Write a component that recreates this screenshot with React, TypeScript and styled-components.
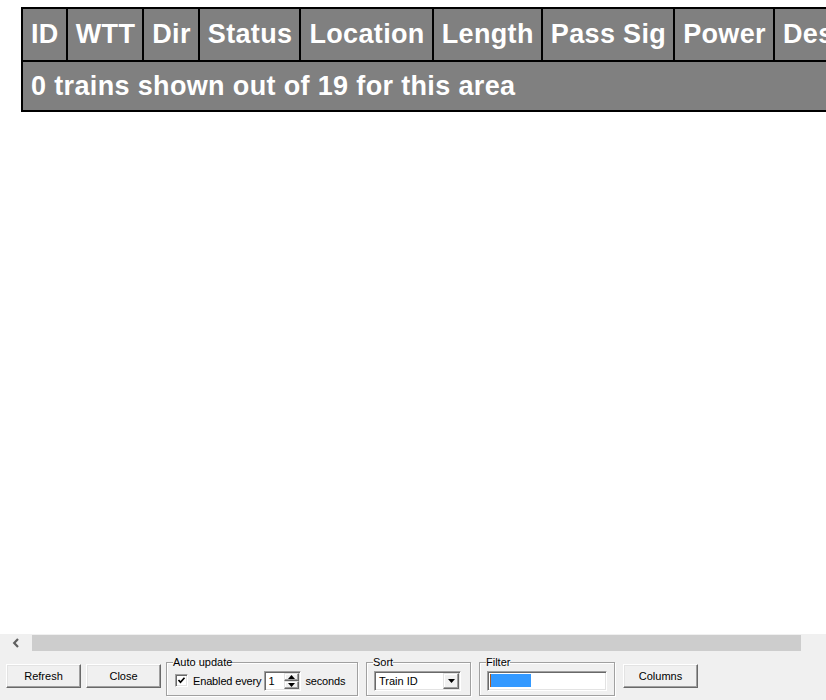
import styled, { createGlobalStyle } from "styled-components";

const GlobalStyle = createGlobalStyle`
  html, body {
    margin: 0;
    padding: 0;
    height: 100%;
  }
  body {
    font-family: "Liberation Sans", Arial, sans-serif;
    background: #ffffff;
    overflow: hidden;
  }
  #root {
    height: 100%;
  }
`;

const columns = [
  "ID",
  "WTT",
  "Dir",
  "Status",
  "Location",
  "Length",
  "Pass Sig",
  "Power",
  "Description",
];

export default function App() {
  return (
    <>
      <GlobalStyle />
      <Page>
        <Content>
          <Table>
            <tbody>
              <tr>
                {columns.map((c) => (
                  <Cell key={c} h={51}>
                    {c}
                  </Cell>
                ))}
              </tr>
              <tr>
                <Cell h={48} colSpan={columns.length}>
                  0 trains shown out of 19 for this area
                </Cell>
              </tr>
            </tbody>
          </Table>
        </Content>

        <Bottom>
          <ScrollBar>
            <ArrowBtn>
              <svg width="8" height="10" viewBox="0 0 8 10">
                <polyline
                  points="6,1 2.2,5 6,9"
                  fill="none"
                  stroke="#606060"
                  strokeWidth="2.2"
                />
              </svg>
            </ArrowBtn>
            <Thumb />
          </ScrollBar>

          <Controls>
            <Button>Refresh</Button>
            <Button>Close</Button>

            <Group w={192}>
              <Legend>Auto update</Legend>
              <Row>
                <CheckBox>
                  <svg width="9" height="9" viewBox="0 0 9 9">
                    <polyline
                      points="1.5,4 3.5,6.2 7.5,1.8"
                      fill="none"
                      stroke="#000"
                      strokeWidth="1.7"
                    />
                  </svg>
                </CheckBox>
                <Label>Enabled every</Label>
                <Spin>
                  <SpinText>1</SpinText>
                  <SpinButtons>
                    <SpinBtn>
                      <svg width="7" height="4" viewBox="0 0 7 4">
                        <polygon points="3.5,0 7,4 0,4" fill="#000" />
                      </svg>
                    </SpinBtn>
                    <SpinBtn>
                      <svg width="7" height="4" viewBox="0 0 7 4">
                        <polygon points="0,0 7,0 3.5,4" fill="#000" />
                      </svg>
                    </SpinBtn>
                  </SpinButtons>
                </Spin>
                <Label>seconds</Label>
              </Row>
            </Group>

            <Group w={105}>
              <Legend>Sort</Legend>
              <Combo>
                <ComboText>Train ID</ComboText>
                <DropBtn>
                  <svg width="7" height="4" viewBox="0 0 7 4">
                    <polygon points="0,0 7,0 3.5,4" fill="#000" />
                  </svg>
                </DropBtn>
              </Combo>
            </Group>

            <Group w={136}>
              <Legend>Filter</Legend>
              <Edit>
                <Caret />
                <Selection />
              </Edit>
            </Group>

            <Button>Columns</Button>
          </Controls>
        </Bottom>
      </Page>
    </>
  );
}

const Page = styled.div`
  height: 100%;
  display: flex;
  flex-direction: column;
`;

const Content = styled.div`
  flex: 1;
  overflow: hidden;
  background: #ffffff;
  padding: 7px 0 0 21px;
`;

const Table = styled.table`
  border-collapse: collapse;
  border: 2px solid #000;
  white-space: nowrap;
`;

const Cell = styled.td<{ h: number }>`
  background: #808080;
  color: #ffffff;
  border: 2px solid #000;
  height: ${({ h }) => h}px;
  padding: 0 7px 0 8px;
  font-family: "Liberation Sans", Arial, sans-serif;
  font-weight: bold;
  font-size: 27px;
  letter-spacing: 0.35px;
  text-align: left;
  vertical-align: middle;
`;

const Bottom = styled.div`
  background: #f0f0f0;
  height: 66px;
  display: flex;
  flex-direction: column;
`;

const ScrollBar = styled.div`
  height: 17px;
  display: flex;
  align-items: stretch;
`;

const ArrowBtn = styled.div`
  width: 32px;
  display: flex;
  align-items: center;
  justify-content: center;
`;

const Thumb = styled.div`
  width: 769px;
  margin: 1px 0 0;
  background: #cdcdcd;
`;

const Controls = styled.div`
  flex: 1;
  display: flex;
  align-items: center;
  padding-left: 6px;
  gap: 5px;
  font-size: 11px;
  color: #000;
  white-space: nowrap;
`;

const Button = styled.div`
  box-sizing: border-box;
  width: 75px;
  height: 24px;
  display: flex;
  align-items: center;
  justify-content: center;
  background: #f0f0f0;
  border: 1px solid;
  border-color: #ffffff #696969 #696969 #ffffff;
  box-shadow: inset -1px -1px 0 #a0a0a0, inset 1px 1px 0 #e3e3e3;
  font-size: 11px;

  fieldset + & {
    margin-left: 3px;
  }
`;

const Group = styled.fieldset<{ w: number }>`
  box-sizing: border-box;
  width: ${({ w }) => w}px;
  margin: 0;
  padding: 2px 4px 4px 7px;
  border: 1px solid #a0a0a0;
  box-shadow: 1px 1px 0 #ffffff, inset 1px 1px 0 #ffffff;
  min-inline-size: 0;

  & + & {
    margin-left: 3px;
  }
`;

const Legend = styled.legend`
  padding: 0;
  margin-left: -1px;
  font-size: 11px;
  line-height: 13px;
`;

const Row = styled.div`
  display: flex;
  align-items: center;
  height: 20px;
  padding-left: 1px;
`;

const CheckBox = styled.span`
  box-sizing: border-box;
  flex: none;
  width: 13px;
  height: 13px;
  background: #fff;
  border: 1px solid;
  border-color: #a0a0a0 #ffffff #ffffff #a0a0a0;
  box-shadow: inset 1px 1px 0 #696969, inset -1px -1px 0 #e3e3e3;
  display: flex;
  align-items: center;
  justify-content: center;
  margin-right: 5px;
`;

const Label = styled.span`
  font-size: 11px;
  letter-spacing: -0.15px;
  margin-right: 3px;
`;

const sunken = `
  box-sizing: border-box;
  flex: none;
  height: 20px;
  background: #ffffff;
  border: 1px solid;
  border-color: #a0a0a0 #ffffff #ffffff #a0a0a0;
  box-shadow: inset 1px 1px 0 #696969, inset -1px -1px 0 #e3e3e3;
  display: flex;
  align-items: center;
`;

const Spin = styled.div`
  ${sunken}
  width: 37px;
  padding: 2px 1px 2px 3px;
  margin-right: 4px;
`;

const SpinText = styled.span`
  flex: 1;
  font-size: 11px;
`;

const SpinButtons = styled.div`
  display: flex;
  flex-direction: column;
  width: 15px;
  height: 16px;
`;

const raised = `
  box-sizing: border-box;
  background: #f0f0f0;
  border: 1px solid;
  border-color: #e3e3e3 #696969 #696969 #e3e3e3;
  box-shadow: inset -1px -1px 0 #a0a0a0, inset 1px 1px 0 #ffffff;
  display: flex;
  align-items: center;
  justify-content: center;
`;

const SpinBtn = styled.div`
  ${raised}
  flex: 1;
`;

const Combo = styled.div`
  ${sunken}
  width: 87px;
  padding: 2px 1px 2px 4px;
`;

const ComboText = styled.span`
  flex: 1;
  font-size: 11px;
`;

const DropBtn = styled.div`
  ${raised}
  width: 16px;
  height: 16px;
`;

const Edit = styled.div`
  ${sunken}
  width: 120px;
  padding: 2px;
`;

const Caret = styled.span`
  width: 1px;
  height: 13px;
  background: #b05a1c;
`;

const Selection = styled.span`
  width: 40px;
  height: 13px;
  background: #3399ff;
`;
